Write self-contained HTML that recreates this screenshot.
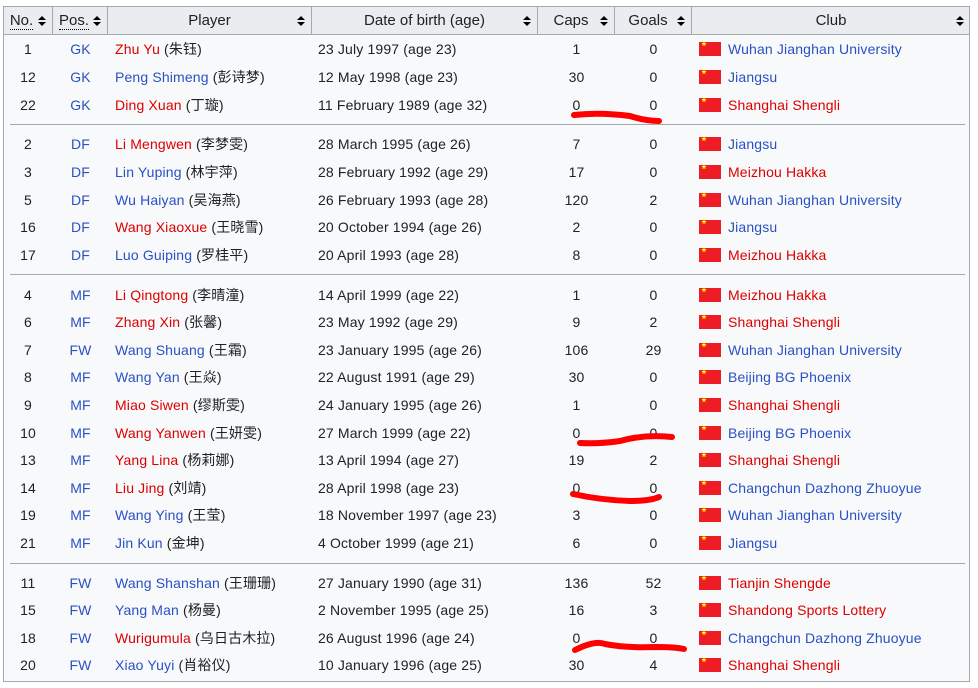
<!DOCTYPE html>
<html><head><meta charset="utf-8"><style>
body{margin:0;width:978px;height:688px;background:#fff;font-family:"Liberation Sans","Noto Sans CJK SC",sans-serif;font-size:14px;color:#202122;position:relative;overflow:hidden}
#t{position:absolute;left:3px;top:6px;width:967px;height:676px;background:#f8f9fa;border:1px solid #a2a9b1;box-sizing:border-box}
#h{position:absolute;left:3px;top:6px;width:967px;height:29px;background:#eaecf0;border:1px solid #a2a9b1;box-sizing:border-box}
.hc{position:absolute;top:6px;height:29px;border-right:1px solid #a2a9b1;box-sizing:border-box;line-height:29px;text-align:center;font-size:15px}
.ar{position:absolute;right:6px;top:10px;width:8px;height:10px}
.ar:before{content:"";position:absolute;left:0;top:0;border-left:4px solid transparent;border-right:4px solid transparent;border-bottom:4px solid #000}
.ar:after{content:"";position:absolute;left:0;top:6px;border-left:4px solid transparent;border-right:4px solid transparent;border-top:4px solid #000}
.r{position:absolute;left:0;width:978px;height:20px;line-height:20px;letter-spacing:0.15px}
.r span{position:absolute;white-space:nowrap}
.n{left:3px;width:50px;text-align:center}
.p{left:53px;width:55px;text-align:center;color:#2a50c4}
.pl{left:115px}
.d{left:318px}
.c{left:538px;width:77px;text-align:center}
.g{left:615px;width:77px;text-align:center}
.f{left:699px;top:3px;width:22px;height:14px;background:#ee1c25}
.f:after{content:"★";position:absolute;left:2px;top:-4px;font-size:6px;color:#ff0;line-height:14px}
.cl{left:728px}
.b{color:#2a50c4}.x{color:#d00}
.sep{position:absolute;left:10px;width:955px;height:1px;background:#a2a9b1}
</style></head><body>
<div id="t"></div><div id="h"></div>
<div class="hc" style="left:3px;width:50px"><span style="border-bottom:1px dotted #000;margin-right:12px">No.</span><span class="ar"></span></div>
<div class="hc" style="left:53px;width:55px"><span style="border-bottom:1px dotted #000;margin-right:12px">Pos.</span><span class="ar"></span></div>
<div class="hc" style="left:108px;width:204px">Player<span class="ar"></span></div>
<div class="hc" style="left:312px;width:226px">Date of birth (age)<span class="ar"></span></div>
<div class="hc" style="left:538px;width:77px"><span style="margin-right:10px">Caps</span><span class="ar"></span></div>
<div class="hc" style="left:615px;width:77px"><span style="margin-right:10px">Goals</span><span class="ar"></span></div>
<div class="hc" style="left:692px;width:278px;border-right:none">Club<span class="ar"></span></div>

<div class="r" style="top:39px"><span class="n">1</span><span class="p">GK</span><span class="pl"><a class="x">Zhu Yu</a> (朱钰)</span><span class="d">23 July 1997 (age 23)</span><span class="c">1</span><span class="g">0</span><span class="f"></span><span class="cl b">Wuhan Jianghan University</span></div>
<div class="r" style="top:67px"><span class="n">12</span><span class="p">GK</span><span class="pl"><a class="b">Peng Shimeng</a> (彭诗梦)</span><span class="d">12 May 1998 (age 23)</span><span class="c">30</span><span class="g">0</span><span class="f"></span><span class="cl b">Jiangsu</span></div>
<div class="r" style="top:95px"><span class="n">22</span><span class="p">GK</span><span class="pl"><a class="x">Ding Xuan</a> (丁璇)</span><span class="d">11 February 1989 (age 32)</span><span class="c">0</span><span class="g">0</span><span class="f"></span><span class="cl x">Shanghai Shengli</span></div>
<div class="sep" style="top:124px"></div>
<div class="r" style="top:134px"><span class="n">2</span><span class="p">DF</span><span class="pl"><a class="x">Li Mengwen</a> (李梦雯)</span><span class="d">28 March 1995 (age 26)</span><span class="c">7</span><span class="g">0</span><span class="f"></span><span class="cl b">Jiangsu</span></div>
<div class="r" style="top:162px"><span class="n">3</span><span class="p">DF</span><span class="pl"><a class="b">Lin Yuping</a> (林宇萍)</span><span class="d">28 February 1992 (age 29)</span><span class="c">17</span><span class="g">0</span><span class="f"></span><span class="cl x">Meizhou Hakka</span></div>
<div class="r" style="top:190px"><span class="n">5</span><span class="p">DF</span><span class="pl"><a class="b">Wu Haiyan</a> (吴海燕)</span><span class="d">26 February 1993 (age 28)</span><span class="c">120</span><span class="g">2</span><span class="f"></span><span class="cl b">Wuhan Jianghan University</span></div>
<div class="r" style="top:217px"><span class="n">16</span><span class="p">DF</span><span class="pl"><a class="x">Wang Xiaoxue</a> (王晓雪)</span><span class="d">20 October 1994 (age 26)</span><span class="c">2</span><span class="g">0</span><span class="f"></span><span class="cl b">Jiangsu</span></div>
<div class="r" style="top:245px"><span class="n">17</span><span class="p">DF</span><span class="pl"><a class="b">Luo Guiping</a> (罗桂平)</span><span class="d">20 April 1993 (age 28)</span><span class="c">8</span><span class="g">0</span><span class="f"></span><span class="cl x">Meizhou Hakka</span></div>
<div class="sep" style="top:274px"></div>
<div class="r" style="top:285px"><span class="n">4</span><span class="p">MF</span><span class="pl"><a class="x">Li Qingtong</a> (李晴潼)</span><span class="d">14 April 1999 (age 22)</span><span class="c">1</span><span class="g">0</span><span class="f"></span><span class="cl x">Meizhou Hakka</span></div>
<div class="r" style="top:312px"><span class="n">6</span><span class="p">MF</span><span class="pl"><a class="x">Zhang Xin</a> (张馨)</span><span class="d">23 May 1992 (age 29)</span><span class="c">9</span><span class="g">2</span><span class="f"></span><span class="cl x">Shanghai Shengli</span></div>
<div class="r" style="top:340px"><span class="n">7</span><span class="p">FW</span><span class="pl"><a class="b">Wang Shuang</a> (王霜)</span><span class="d">23 January 1995 (age 26)</span><span class="c">106</span><span class="g">29</span><span class="f"></span><span class="cl b">Wuhan Jianghan University</span></div>
<div class="r" style="top:367px"><span class="n">8</span><span class="p">MF</span><span class="pl"><a class="b">Wang Yan</a> (王焱)</span><span class="d">22 August 1991 (age 29)</span><span class="c">30</span><span class="g">0</span><span class="f"></span><span class="cl b">Beijing BG Phoenix</span></div>
<div class="r" style="top:395px"><span class="n">9</span><span class="p">MF</span><span class="pl"><a class="x">Miao Siwen</a> (缪斯雯)</span><span class="d">24 January 1995 (age 26)</span><span class="c">1</span><span class="g">0</span><span class="f"></span><span class="cl x">Shanghai Shengli</span></div>
<div class="r" style="top:423px"><span class="n">10</span><span class="p">MF</span><span class="pl"><a class="x">Wang Yanwen</a> (王妍雯)</span><span class="d">27 March 1999 (age 22)</span><span class="c">0</span><span class="g">0</span><span class="f"></span><span class="cl b">Beijing BG Phoenix</span></div>
<div class="r" style="top:450px"><span class="n">13</span><span class="p">MF</span><span class="pl"><a class="x">Yang Lina</a> (杨莉娜)</span><span class="d">13 April 1994 (age 27)</span><span class="c">19</span><span class="g">2</span><span class="f"></span><span class="cl x">Shanghai Shengli</span></div>
<div class="r" style="top:478px"><span class="n">14</span><span class="p">MF</span><span class="pl"><a class="x">Liu Jing</a> (刘靖)</span><span class="d">28 April 1998 (age 23)</span><span class="c">0</span><span class="g">0</span><span class="f"></span><span class="cl b">Changchun Dazhong Zhuoyue</span></div>
<div class="r" style="top:505px"><span class="n">19</span><span class="p">MF</span><span class="pl"><a class="b">Wang Ying</a> (王莹)</span><span class="d">18 November 1997 (age 23)</span><span class="c">3</span><span class="g">0</span><span class="f"></span><span class="cl b">Wuhan Jianghan University</span></div>
<div class="r" style="top:533px"><span class="n">21</span><span class="p">MF</span><span class="pl"><a class="b">Jin Kun</a> (金坤)</span><span class="d">4 October 1999 (age 21)</span><span class="c">6</span><span class="g">0</span><span class="f"></span><span class="cl b">Jiangsu</span></div>
<div class="sep" style="top:563px"></div>
<div class="r" style="top:573px"><span class="n">11</span><span class="p">FW</span><span class="pl"><a class="b">Wang Shanshan</a> (王珊珊)</span><span class="d">27 January 1990 (age 31)</span><span class="c">136</span><span class="g">52</span><span class="f"></span><span class="cl x">Tianjin Shengde</span></div>
<div class="r" style="top:600px"><span class="n">15</span><span class="p">FW</span><span class="pl"><a class="b">Yang Man</a> (杨曼)</span><span class="d">2 November 1995 (age 25)</span><span class="c">16</span><span class="g">3</span><span class="f"></span><span class="cl x">Shandong Sports Lottery</span></div>
<div class="r" style="top:628px"><span class="n">18</span><span class="p">FW</span><span class="pl"><a class="x">Wurigumula</a> (乌日古木拉)</span><span class="d">26 August 1996 (age 24)</span><span class="c">0</span><span class="g">0</span><span class="f"></span><span class="cl b">Changchun Dazhong Zhuoyue</span></div>
<div class="r" style="top:655px"><span class="n">20</span><span class="p">FW</span><span class="pl"><a class="b">Xiao Yuyi</a> (肖裕仪)</span><span class="d">10 January 1996 (age 25)</span><span class="c">30</span><span class="g">4</span><span class="f"></span><span class="cl x">Shanghai Shengli</span></div>

<svg style="position:absolute;left:0;top:0" width="978" height="688"><g fill="none" stroke="#f00" stroke-width="6" stroke-linecap="round">
<path d="M574 115 Q600 112 630 116 Q645 121 659 121"/>
<path d="M580 443 Q600 444 620 441 Q645 434 672 437"/>
<path d="M573 494 Q600 500 630 501 Q650 501 659 497"/>
<path d="M575 650 Q595 640 605 644 Q625 648 655 647 Q675 647 684 649"/>
</g></svg>
</body></html>
